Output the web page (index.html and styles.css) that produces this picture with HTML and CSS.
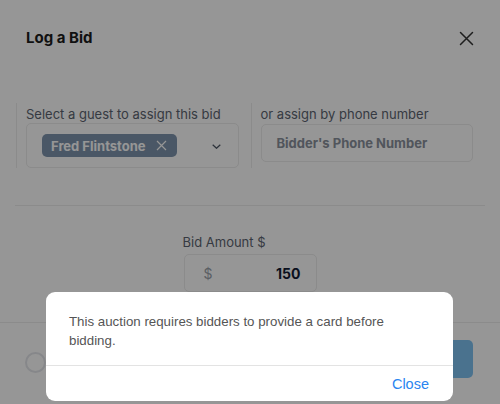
FILE: index.html
```html
<!DOCTYPE html>
<html>
<head>
<meta charset="utf-8">
<link rel="stylesheet" href="styles.css">
</head>
<body>
<div class="modal">
  <header class="modal-header">
    <h1 class="title">Log a Bid</h1>
    <svg class="close-icon" width="15" height="15" viewBox="0 0 15 15"><path d="M1.5 1.5 L13.5 13.5 M13.5 1.5 L1.5 13.5" stroke="#333333" stroke-width="1.5" fill="none" stroke-linecap="round"/></svg>
  </header>
  <section class="assign-row">
    <div class="assign-col">
      <label class="field-label">Select a guest to assign this bid</label>
      <div class="select-box">
        <span class="chip">Fred Flintstone
          <svg class="chip-x" width="11" height="11" viewBox="0 0 11 11"><path d="M1 1 L10 10 M10 1 L1 10" stroke="#ffffff" stroke-width="1.2" fill="none"/></svg>
        </span>
        <svg class="chevron" width="9" height="5" viewBox="0 0 9 5"><path d="M0.7 0.7 L4.5 4.3 L8.3 0.7" stroke="#4b5563" stroke-width="1.2" fill="none"/></svg>
      </div>
    </div>
    <div class="assign-col">
      <label class="field-label">or assign by phone number</label>
      <div class="phone-box">Bidder's Phone Number</div>
    </div>
  </section>
  <hr class="divider">
  <section class="amount">
    <label class="field-label">Bid Amount $</label>
    <div class="amount-box"><span class="currency">$</span><span class="value">150</span></div>
  </section>
  <footer class="modal-footer">
    <span class="ring"></span>
    <button class="submit">Log Bid</button>
  </footer>
</div>
<div class="overlay"></div>
<div class="alert">
  <p class="alert-text">This auction requires bidders to provide a card before bidding.</p>
  <div class="alert-actions"><span class="alert-close">Close</span></div>
</div>
</body>
</html>
```

FILE: styles.css
```css
html, body {
  margin: 0;
  padding: 0;
  width: 500px;
  height: 404px;
  overflow: hidden;
  background: #ffffff;
  font-family: Inter, "Noto Sans", sans-serif;
}
.modal {
  width: 500px;
  height: 404px;
  background: #ffffff;
  display: flex;
  flex-direction: column;
}
.modal-header {
  display: flex;
  justify-content: space-between;
  align-items: center;
  padding: 28px 26px 0 26px;
  height: 20px;
}
.title {
  margin: 0;
  font-size: 15px;
  line-height: 20px;
  font-weight: 700;
  color: #1c1c1c;
}
.assign-row {
  margin: 55px 15px 0 16px;
  display: grid;
  grid-template-columns: 1fr 1fr;
}
.assign-col {
  border-left: 1px solid #ececec;
  padding: 2px 12px 0 9px;
  height: 63px;
  display: flex;
  flex-direction: column;
}
.field-label {
  font-size: 13px;
  line-height: 18px;
  color: #5c6470;
}
.select-box {
  height: 43px;
  border: 1px solid #ececec;
  border-radius: 5px;
  display: flex;
  align-items: center;
  justify-content: space-between;
  padding: 0 17px 0 15px;
}
.chip {
  display: inline-flex;
  align-items: center;
  gap: 10px;
  height: 23px;
  padding: 0 10px 0 9px;
  border-radius: 5px;
  background: #7f95ad;
  color: #ffffff;
  font-weight: 700;
  font-size: 13px;
}
.chip-x {
  display: block;
}
.chevron {
  display: block;
  margin-top: 1px;
}
.phone-box {
  margin-top: 1px;
  height: 36px;
  border: 1px solid #ececec;
  border-radius: 5px;
  display: flex;
  align-items: center;
  padding-left: 15px;
  font-size: 13px;
  font-weight: 700;
  color: #8a919c;
}
.divider {
  margin: 37px 15px 0 15px;
  border: 0;
  border-top: 1px solid #ececec;
  height: 0;
}
.amount {
  align-self: center;
  width: 133px;
  margin-top: 27px;
  display: flex;
  flex-direction: column;
}
.amount .field-label {
  margin-left: -1px;
}
.amount-box {
  margin-top: 3px;
  height: 36px;
  border: 1px solid #ececec;
  border-radius: 5px;
  display: flex;
  align-items: center;
  justify-content: space-between;
  padding: 0 15px 0 19px;
  font-size: 13px;
}
.currency {
  color: #9aa1aa;
  font-size: 14px;
}
.value {
  font-weight: 700;
  font-size: 14px;
  color: #111b33;
}
.modal-footer {
  margin-top: 30px;
  border-top: 1px solid #ececec;
  display: flex;
  align-items: center;
  justify-content: space-between;
  padding: 17px 27px 0 25px;
}
.ring {
  width: 17px;
  height: 17px;
  border: 2.5px solid #e4e6ea;
  border-radius: 50%;
  margin-top: 6px;
}
.submit {
  width: 143px;
  height: 38px;
  border: 0;
  border-radius: 5px;
  background: #7fc2f2;
  color: #ffffff;
  font-family: Inter, sans-serif;
  font-size: 14px;
  font-weight: 700;
}
.overlay {
  position: fixed;
  inset: 0;
  background: rgba(0, 0, 0, 0.41);
}
.alert {
  position: fixed;
  left: 46px;
  top: 292px;
  width: 407px;
  height: 109px;
  background: #ffffff;
  border-radius: 9px;
  display: flex;
  flex-direction: column;
  font-family: "Liberation Sans", Arial, sans-serif;
}
.alert-text {
  margin: 0;
  padding: 20px 23px 0 23px;
  height: 53px;
  font-size: 13.3px;
  line-height: 19px;
  color: #555555;
  border-bottom: 1px solid #e3e3e3;
}
.alert-actions {
  flex: 1;
  display: flex;
  align-items: center;
  justify-content: flex-end;
  padding-right: 24px;
}
.alert-close {
  color: #2a85f0;
  font-size: 14.5px;
}
```
